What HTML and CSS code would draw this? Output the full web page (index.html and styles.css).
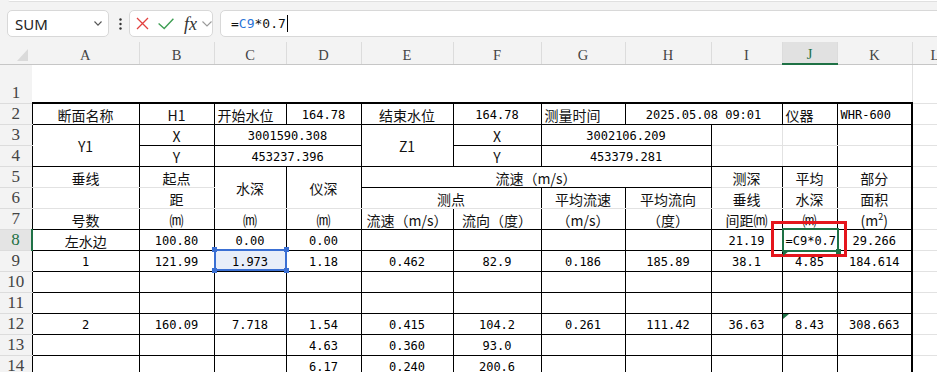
FILE: index.html
```html
<!DOCTYPE html>
<html lang="zh-CN">
<head>
  <meta charset="UTF-8">
  <meta name="viewport" content="width=device-width, initial-scale=1.0">
  <title>断面测量表</title>
  <link rel="stylesheet" href="styles.css">
</head>
<body>

<div class="top">
  <div class="top-edge"></div>
  <div class="fbar">
    <div class="namebox">
      <span>SUM</span>
      <svg width="8" height="5" viewBox="0 0 8 5"><path d="M0.5 0.5 L4 4.2 L7.5 0.5"/></svg>
    </div>
    <svg class="kebab" width="3" height="12" viewBox="0 0 3 12">
      <circle cx="1.5" cy="1.5" r="1.2"/><circle cx="1.5" cy="6" r="1.2"/><circle cx="1.5" cy="10.5" r="1.2"/>
    </svg>
    <div class="fxbox">
      <svg class="ic-x" width="13" height="13" viewBox="0 0 13 13"><path d="M1 1 L12 12 M12 1 L1 12"/></svg>
      <svg class="ic-ok" width="16" height="12" viewBox="0 0 16 12"><path d="M0.6 5.6 L6.2 10.6 L15.4 0.8"/></svg>
      <span class="fx">fx</span>
      <svg class="ic-dd" width="10" height="6" viewBox="0 0 10 6"><path d="M0.5 0.5 L5 5 L9.5 0.5"/></svg>
    </div>
    <div class="formula">=<span class="ref">C9</span>*0.7<span class="caret"></span></div>
  </div>
</div>

<table class="sheet">
  <colgroup>
    <col class="w-rh"><col class="w-a"><col class="w-b"><col class="w-c"><col class="w-d">
    <col class="w-e"><col class="w-f"><col class="w-g"><col class="w-h"><col class="w-i">
    <col class="w-j"><col class="w-k"><col class="w-l"><col class="w-m">
  </colgroup>
  <tr class="cols">
    <th class="corner"><svg width="11" height="12" viewBox="0 0 11 12"><polygon points="11,0 11,12 0,12"/></svg></th>
    <th>A</th><th>B</th><th>C</th><th>D</th><th>E</th><th>F</th><th>G</th><th>H</th><th>I</th>
    <th class="on">J</th><th>K</th><th>L</th><th>M</th>
  </tr>
  <tr class="r1">
    <th class="rh">1</th>
    <td colspan="11"></td><td class="l"></td><td class="l"></td>
  </tr>
  <tr class="r2">
    <th class="rh">2</th>
    <td>断面名称</td><td>H1</td><td class="lf">开始水位</td><td class="n">164.78</td>
    <td>结束水位</td><td class="n">164.78</td><td class="lf">测量时间</td>
    <td class="n" colspan="2">2025.05.08 09:01</td><td class="lf">仪器</td><td class="k lf n">WHR-600</td>
    <td class="l"></td><td class="l"></td>
  </tr>
  <tr>
    <th class="rh">3</th>
    <td rowspan="2">Y1</td><td>X</td><td class="n" colspan="2">3001590.308</td>
    <td rowspan="2">Z1</td><td>X</td><td class="n" colspan="2">3002106.209</td>
    <td class="nr nb"></td><td class="nl nb"></td><td class="k nb"></td>
    <td class="l"></td><td class="l"></td>
  </tr>
  <tr>
    <th class="rh">4</th>
    <td>Y</td><td class="n" colspan="2">453237.396</td>
    <td>Y</td><td class="n" colspan="2">453379.281</td>
    <td class="nr nt"></td><td class="nl nt"></td><td class="k nt"></td>
    <td class="l"></td><td class="l"></td>
  </tr>
  <tr>
    <th class="rh">5</th>
    <td class="nb">垂线</td><td class="nb">起点</td><td class="nb" rowspan="2">水深</td><td class="nb" rowspan="2">仪深</td>
    <td colspan="4">流速（m/s）</td>
    <td class="nb">测深</td><td class="nb">平均</td><td class="k nb">部分</td>
    <td class="l"></td><td class="l"></td>
  </tr>
  <tr>
    <th class="rh">6</th>
    <td class="nt nb"></td><td class="nt nb">距</td>
    <td class="nb" colspan="2">测点</td><td class="nb">平均流速</td><td class="nb">平均流向</td>
    <td class="nt nb">垂线</td><td class="nt nb">水深</td><td class="k nt nb">面积</td>
    <td class="l"></td><td class="l"></td>
  </tr>
  <tr>
    <th class="rh">7</th>
    <td class="nt">号数</td><td class="nt">⒨</td><td class="nt">⒨</td><td class="nt">⒨</td>
    <td class="nt">流速（m/s）</td><td class="nt">流向（度）</td><td class="nt">（m/s）</td><td class="nt">（度）</td>
    <td class="nt">间距⒨</td><td class="nt">⒨</td><td class="k nt">(m<sup>2</sup>)</td>
    <td class="l"></td><td class="l"></td>
  </tr>
  <tr>
    <th class="rh on">8</th>
    <td>左水边</td><td class="n">100.80</td><td class="n">0.00</td><td class="n">0.00</td>
    <td></td><td></td><td></td><td></td><td class="n">21.19</td>
    <td class="n lf editing">=C9*0.7<span class="edit-box"><span class="fill-handle"></span></span><span class="callout"></span></td>
    <td class="k n">29.266</td>
    <td class="l"></td><td class="l"></td>
  </tr>
  <tr>
    <th class="rh">9</th>
    <td class="n">1</td><td class="n">121.99</td>
    <td class="n sel">1.973<span class="ref-box"><span class="h tl"></span><span class="h tr"></span><span class="h bl"></span><span class="h br"></span></span></td>
    <td class="n">1.18</td><td class="n">0.462</td><td class="n">82.9</td><td class="n">0.186</td><td class="n">185.89</td>
    <td class="n">38.1</td><td class="n err">4.85</td><td class="k n">184.614</td>
    <td class="l"></td><td class="l"></td>
  </tr>
  <tr>
    <th class="rh">10</th>
    <td></td><td></td><td></td><td></td><td></td><td></td><td></td><td></td><td></td><td></td><td class="k"></td>
    <td class="l"></td><td class="l"></td>
  </tr>
  <tr>
    <th class="rh">11</th>
    <td></td><td></td><td></td><td></td><td></td><td></td><td></td><td></td><td></td><td></td><td class="k"></td>
    <td class="l"></td><td class="l"></td>
  </tr>
  <tr>
    <th class="rh">12</th>
    <td class="n">2</td><td class="n">160.09</td><td class="n">7.718</td><td class="n">1.54</td><td class="n">0.415</td>
    <td class="n">104.2</td><td class="n">0.261</td><td class="n">111.42</td><td class="n">36.63</td>
    <td class="n err">8.43</td><td class="k n">308.663</td>
    <td class="l"></td><td class="l"></td>
  </tr>
  <tr>
    <th class="rh">13</th>
    <td></td><td></td><td></td><td class="n">4.63</td><td class="n">0.360</td><td class="n">93.0</td>
    <td></td><td></td><td></td><td></td><td class="k"></td>
    <td class="l"></td><td class="l"></td>
  </tr>
  <tr>
    <th class="rh">14</th>
    <td></td><td></td><td></td><td class="n">6.17</td><td class="n">0.240</td><td class="n">200.6</td>
    <td></td><td></td><td></td><td></td><td class="k"></td>
    <td class="l"></td><td class="l"></td>
  </tr>
</table>

</body>
</html>
```

FILE: styles.css
```css
* {
  box-sizing: border-box;
}

body {
  margin: 0;
  width: 937px;
  height: 372px;
  overflow: hidden;
  background-color: #fff;
  font-family: "Noto Sans CJK SC", sans-serif;
}

/* formula bar */

.top {
  background-color: #f3f3f3;
}

.top-edge {
  height: 2px;
  margin-left: 8px;
  background-color: #fff;
  border-bottom: 1px solid #e0e0e0;
  border-bottom-left-radius: 6px;
}

.fbar {
  display: flex;
  align-items: center;
  height: 40px;
  padding: 8px 0 5px 7px;
}

.namebox {
  display: flex;
  align-items: center;
  justify-content: space-between;
  width: 102px;
  height: 27px;
  padding: 0 6px 0 7px;
  background-color: #fff;
  border: 1px solid #d8d8d8;
  border-radius: 5px;
  font-family: "Noto Sans", sans-serif;
  font-size: 15px;
  color: #222;
}

.namebox svg path {
  fill: none;
  stroke: #555;
  stroke-width: 1.1;
}

.kebab {
  margin: 0 7px 0 10px;
  fill: #333;
}

.fxbox {
  display: flex;
  align-items: center;
  width: 84px;
  height: 27px;
  padding-left: 6px;
  background-color: #fff;
  border: 1px solid #d8d8d8;
  border-radius: 5px;
}

.ic-x path {
  fill: none;
  stroke: #e2403f;
  stroke-width: 1.3;
}

.ic-ok {
  margin-left: 9px;
}

.ic-ok path {
  fill: none;
  stroke: #3f9f54;
  stroke-width: 1.4;
}

.fx {
  margin-left: 10px;
  font-family: "Liberation Serif", serif;
  font-style: italic;
  font-size: 18px;
  color: #333;
  line-height: 18px;
}

.ic-dd {
  margin-left: 5px;
}

.ic-dd path {
  fill: none;
  stroke: #9a9a9a;
  stroke-width: 1.1;
}

.formula {
  flex: 1;
  display: flex;
  align-items: center;
  height: 27px;
  margin: 0 -10px 0 7px;
  padding-left: 10px;
  background-color: #fff;
  border: 1px solid #d8d8d8;
  border-radius: 5px;
  font-family: "DejaVu Sans Mono", monospace;
  font-size: 13px;
  color: #111;
}

.formula .ref {
  color: #2b74d8;
}

.caret {
  display: inline-block;
  width: 1px;
  height: 17px;
  margin-left: 1px;
  background-color: #000;
}

/* sheet */

.sheet {
  border-collapse: collapse;
  table-layout: fixed;
  width: 1030px;
}

.w-rh { width: 32px; }
.w-a { width: 107px; }
.w-b { width: 75px; }
.w-c { width: 72px; }
.w-d { width: 75px; }
.w-e { width: 92px; }
.w-f { width: 88px; }
.w-g { width: 84px; }
.w-h { width: 86px; }
.w-i { width: 71px; }
.w-j { width: 55px; }
.w-k { width: 75px; }
.w-l { width: 46px; }
.w-m { width: 72px; }

.sheet tr {
  height: 21px;
}

.sheet tr.cols {
  height: 22px;
}

.sheet tr.r1 {
  height: 39px;
}

.cols th {
  padding: 0 0 1px;
  background-color: #f3f3f3;
  border-right: 1px solid #dcdcdc;
  border-bottom: 1px solid #c6c6c6;
  font-family: "Liberation Serif", serif;
  font-size: 14.5px;
  font-weight: normal;
  line-height: 16px;
  color: #444;
  vertical-align: bottom;
}

.cols th.corner {
  padding: 0 4px 3px 0;
  text-align: right;
  border-right: none;
}

.corner svg {
  display: block;
  margin-left: auto;
  fill: #dadada;
}

.cols th.on {
  background-color: #e1e1e1;
  color: #1e7145;
  border-bottom: 2px solid #1e7145;
}

.sheet th.rh {
  padding: 0 0 1px;
  background-color: #f3f3f3;
  border-bottom: 1px solid #dcdcdc;
  border-right: none;
  font-family: "Liberation Serif", serif;
  font-size: 17px;
  font-weight: normal;
  line-height: 18px;
  color: #444;
  vertical-align: bottom;
}

.sheet th.rh.on {
  background-color: #e4e4e4;
  color: #1e7145;
  border-right: 2px solid #1e7145;
}

.sheet td {
  padding: 2px 2px 0;
  border: 1px solid #000;
  font-size: 14px;
  line-height: 16px;
  color: #111;
  text-align: center;
  vertical-align: middle;
  white-space: nowrap;
}

.sheet td sup {
  font-size: 9px;
  line-height: 0;
}

.sheet .r1 td {
  border: none;
}

.sheet .r1 td.l {
  border-bottom: 1px solid #e2e2e2;
}

.sheet .r2 td {
  border-top: 2px solid #000;
}

.sheet td.l,
.sheet .r2 td.l {
  border: 1px solid #e2e2e2;
  border-right: none;
}

.sheet td.k {
  border-right: 2px solid #000;
}

.sheet td.nb { border-bottom-color: #e2e2e2; }
.sheet td.nt { border-top-color: #e2e2e2; }
.sheet td.nr { border-right-color: #e2e2e2; }
.sheet td.nl { border-left-color: #e2e2e2; }

.sheet td.lf {
  text-align: left;
  padding-left: 3px;
}

.sheet td.n {
  font-family: "DejaVu Sans Mono", monospace;
  font-size: 12px;
  color: #000;
}

/* selection, references and markers */

.sheet td.sel {
  position: relative;
  background-color: #e8eef9;
}

.ref-box {
  position: absolute;
  left: -1px;
  top: -2px;
  width: 73px;
  height: 22px;
  border: 2px solid #3a6fd3;
}

.ref-box .h {
  position: absolute;
  width: 5px;
  height: 5px;
  background-color: #3a6fd3;
}

.h.tl { left: -4px; top: -4px; }
.h.tr { right: -4px; top: -4px; }
.h.bl { left: -4px; bottom: -4px; }
.h.br { right: -4px; bottom: -4px; }

.sheet td.editing {
  position: relative;
  color: #000;
}

.edit-box {
  position: absolute;
  left: -1px;
  top: -2px;
  width: 57px;
  height: 24px;
  border: 2px solid #1e7145;
}

.fill-handle {
  position: absolute;
  right: -4px;
  bottom: -4px;
  width: 5px;
  height: 5px;
  background-color: #1e7145;
}

.callout {
  position: absolute;
  left: -12px;
  top: -9px;
  width: 76px;
  height: 36px;
  border: 3px solid #e5161d;
}

.sheet td.err {
  position: relative;
}

.sheet td.err::before {
  content: "";
  position: absolute;
  left: 0;
  top: 0;
  border-top: 5px solid #1e7145;
  border-right: 6px solid transparent;
}
```
